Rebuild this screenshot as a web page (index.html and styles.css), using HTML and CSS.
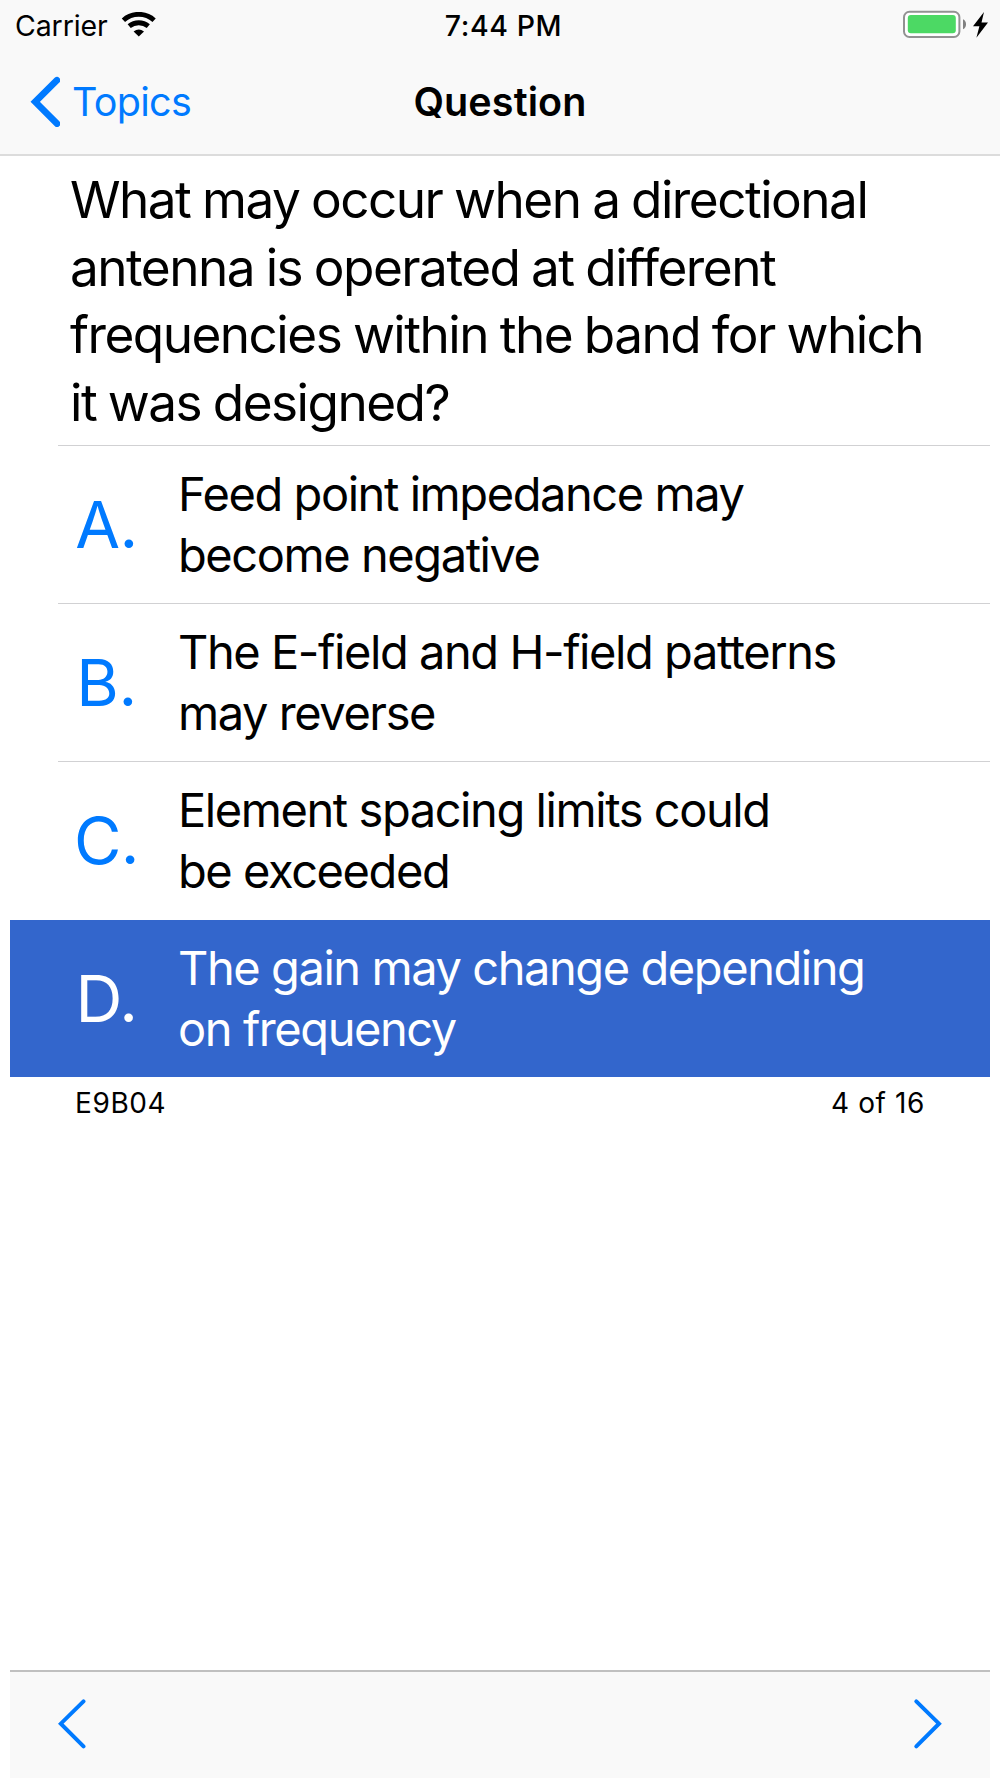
FILE: index.html
```html
<!DOCTYPE html>
<html lang="en">
<head>
    <meta charset="UTF-8">
    <meta name="viewport" content="width=device-width, initial-scale=1.0">
    <title>Question</title>
    <link rel="stylesheet" href="styles.css">
</head>
<body>
    <header class="header">
        <div class="status-bar">
            <div class="carrier">
                <span>Carrier</span>
                <svg class="wifi" width="36" height="26" viewBox="0 0 36 26">
                    <path d="M2.4 8.2A23 23 0 0 1 33.1 8.2" fill="none" stroke="#000" stroke-width="4.9"/>
                    <path d="M8.2 14.2A15 15 0 0 1 27.3 14.2" fill="none" stroke="#000" stroke-width="4.9"/>
                    <path d="M12.6 19.4Q17.8 15.4 23 19.4L17.8 24.6Z"/>
                </svg>
            </div>
            <span class="time">7:44 PM</span>
            <svg class="battery" width="88" height="30" viewBox="0 0 88 30">
                <rect x="2" y="1.8" width="55.4" height="25.2" rx="5.5" fill="#fff" stroke="#929292" stroke-width="2"/>
                <rect x="5.8" y="5" width="48" height="18.3" rx="3" fill="#4cd964"/>
                <path d="M61 9.2Q64 10.5 64 14.2T61 19.3Z" fill="#808080"/>
                <path d="M82 2L71 16.2H77.4L74.4 27.8L86 12.5H79.5Z"/>
            </svg>
        </div>
        <nav class="nav-bar">
            <a class="back">
                <svg width="30" height="52" viewBox="0 0 30 52">
                    <path d="M27 4.2L5.2 25.8L27 47.6" fill="none" stroke="#007aff" stroke-width="6.6" stroke-linecap="round"/>
                </svg>
                <span>Topics</span>
            </a>
            <h1 class="title">Question</h1>
        </nav>
    </header>

    <main class="content">
        <p class="question">What may occur when a directional<br>antenna is operated at different<br>frequencies within the band for which<br>it was designed?</p>
        <ul class="answers">
            <li class="answer">
                <span class="letter">A.</span>
                <span class="text">Feed point impedance may<br>become negative</span>
            </li>
            <li class="answer">
                <span class="letter">B.</span>
                <span class="text">The E-field and H-field patterns<br>may reverse</span>
            </li>
            <li class="answer">
                <span class="letter">C.</span>
                <span class="text">Element spacing limits could<br>be exceeded</span>
            </li>
            <li class="answer selected">
                <span class="letter">D.</span>
                <span class="text">The gain may change depending<br>on frequency</span>
            </li>
        </ul>
        <div class="info">
            <span>E9B04</span>
            <span>4 of 16</span>
        </div>
    </main>

    <footer class="toolbar">
        <svg width="30" height="52" viewBox="0 0 30 52">
            <path d="M25.5 3.3L2.8 25.7L25.5 48.4" fill="none" stroke="#007aff" stroke-width="4" stroke-linecap="round"/>
        </svg>
        <svg width="30" height="52" viewBox="0 0 30 52">
            <path d="M4.3 3.3L27 25.7L4.3 48.4" fill="none" stroke="#007aff" stroke-width="4" stroke-linecap="round"/>
        </svg>
    </footer>
</body>
</html>
```
FILE: styles.css
```css
* {
    box-sizing: border-box;
}
body {
    margin: 0;
    height: 1778px;
    display: flex;
    flex-direction: column;
    background: #fff;
    color: #000;
    font-family: Inter, "Liberation Sans", sans-serif;
}
.header {
    height: 156px;
    background: #f9f9f9;
    border-bottom: 2px solid #dcdcdc;
}
.status-bar {
    display: grid;
    grid-template-columns: 1fr auto 1fr;
    height: 50px;
    padding: 0 10px 0 15px;
    font-size: 28.5px;
    line-height: 51px;
}
.carrier {
    display: flex;
    letter-spacing: -0.1px;
}
.wifi {
    margin: 12px 0 0 13px;
}
.time {
    font-weight: 500;
    letter-spacing: 0.6px;
    padding-left: 2px;
}
.battery {
    justify-self: end;
    margin-top: 10px;
}
.nav-bar {
    display: grid;
    grid-template-columns: 1fr auto 1fr;
    align-items: center;
    height: 104px;
    padding: 0 30px;
}
.back {
    display: flex;
    align-items: center;
    gap: 12px;
    color: #007aff;
    font-size: 39.5px;
    letter-spacing: -0.7px;
}
.title {
    margin: 0;
    font-size: 39.5px;
    font-weight: 600;
    letter-spacing: 0.1px;
}
.content {
    flex: 1;
    padding: 10px 10px 0;
}
.question {
    margin: 0 0 8px;
    padding-left: 60px;
    font-size: 51.3px;
    line-height: 67.7px;
    letter-spacing: -1.53px;
    word-spacing: -1.2px;
    white-space: nowrap;
}
.answers {
    margin: 0;
    padding: 0;
    list-style: none;
}
.answer {
    display: flex;
    align-items: center;
    height: 158px;
    padding-top: 2px;
    background: linear-gradient(#d1d1d3, #d1d1d3) 48px 0 / 100% 1px no-repeat;
}
.letter {
    width: 97px;
    margin-left: 48px;
    text-align: center;
    color: #007aff;
    font-size: 65px;
    letter-spacing: -0.5px;
}
.text {
    margin-left: 23px;
    font-size: 47px;
    line-height: 60.6px;
    letter-spacing: -1.43px;
    white-space: nowrap;
}
.selected {
    height: 157px;
    margin-top: 1px;
    padding-top: 1px;
    background: #3366cc;
    color: #fff;
}
.selected .letter {
    color: #fff;
}
.info {
    display: flex;
    justify-content: space-between;
    padding: 0 65px;
    font-size: 28px;
    line-height: 52px;
    letter-spacing: 0.6px;
}
.toolbar {
    display: flex;
    justify-content: space-between;
    height: 108px;
    margin: 0 10px;
    padding: 26px 48px 0;
    background: #f9f9f9;
    border-top: 2px solid #c0c0c0;
}
```
